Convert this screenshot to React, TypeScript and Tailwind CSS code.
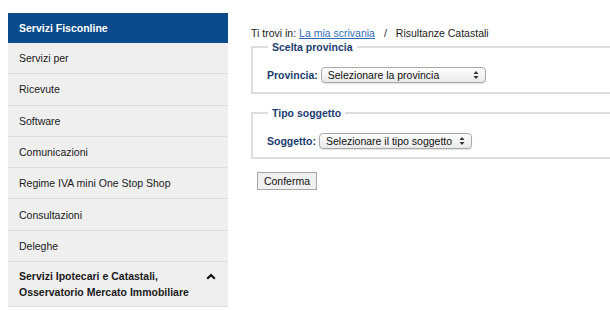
import React from "react";

function Arrows() {
  return (
    <svg width="6" height="9" viewBox="0 0 6 9" className="absolute right-[7px] top-1/2 -translate-y-1/2 pointer-events-none">
      <path d="M3 0.5 L5.5 3.5 L0.5 3.5 Z" fill="#333" />
      <path d="M3 8.5 L5.5 5.5 L0.5 5.5 Z" fill="#333" />
    </svg>
  );
}

function FakeSelect({ text, width }: { text: string; width: string }) {
  return (
    <div className={`relative ${width} h-[16px]`}>
      <select
        defaultValue=""
        className="appearance-none w-full h-full rounded-[4px] border border-[#a9a9a9] bg-gradient-to-b from-white to-[#e9e9e9] pl-[6px] pr-[14px] text-[10.5px] leading-[14px] text-[#111] shadow-[0_1px_1px_rgba(0,0,0,0.12)] font-['Liberation_Sans',Arial,sans-serif] outline-none"
      >
        <option value="">{text}</option>
      </select>
      <Arrows />
    </div>
  );
}

export default function App() {
  const items = [
    "Servizi per",
    "Ricevute",
    "Software",
    "Comunicazioni",
    "Regime IVA mini One Stop Shop",
    "Consultazioni",
    "Deleghe",
  ];
  return (
    <div className="w-[610px] h-[310px] overflow-hidden bg-white font-['Liberation_Sans',Arial,sans-serif] text-[10.5px] leading-[14px] text-[#1a1a1a]">
      <div className="flex pt-[13px] pl-[8px]">
        <nav className="w-[220px] shrink-0 bg-[#efefef]">
          <div className="h-[30px] bg-[#0b4a8b] text-white font-bold flex items-center pl-[11px]">
            Servizi Fisconline
          </div>
          {items.map((t) => (
            <div
              key={t}
              className="h-[31.3px] border-b border-[#dddddd] flex items-center pl-[11px]"
            >
              {t}
            </div>
          ))}
          <div className="flex items-center justify-between pl-[11px] pr-[12px] py-[6px] font-bold leading-[16px] border-b border-[#dddddd]">
            <span>
              Servizi Ipotecari e Catastali,
              <br />
              Osservatorio Mercato Immobiliare
            </span>
            <svg width="10" height="7" viewBox="0 0 10 7" className="mb-[16px]">
              <path d="M1.2 5.8 L5 2 L8.8 5.8" fill="none" stroke="#111" strokeWidth="2.2" />
            </svg>
          </div>
        </nav>

        <main className="ml-[23px] w-[380px] shrink-0 pt-[13px]">
          <div className="flex items-center h-[14px]">
            <span>Ti trovi in:&nbsp;</span>
            <a href="#" className="text-[#2f6db8] underline">
              La mia scrivania
            </a>
            <span className="mx-[9px]">/</span>
            <span>Risultanze Catastali</span>
          </div>

          <fieldset className="border-2 border-[#dedede] pl-[14px] pt-[13px] pb-[9px] m-0">
            <legend className="ml-[1px] px-[4px] font-bold text-[#1b3c70] leading-[14px]">
              Scelta provincia
            </legend>
            <div className="flex items-center">
              <label className="font-bold text-[#1b3c70] mr-[3px]">Provincia:</label>
              <FakeSelect text="Selezionare la provincia" width="w-[165px]" />
            </div>
          </fieldset>

          <fieldset className="mt-[12px] border-2 border-[#dedede] pl-[14px] pt-[13px] pb-[8px] m-0">
            <legend className="ml-[1px] px-[4px] font-bold text-[#1b3c70] leading-[14px]">
              Tipo soggetto
            </legend>
            <div className="flex items-center">
              <label className="font-bold text-[#1b3c70] mr-[3px]">Soggetto:</label>
              <FakeSelect text="Selezionare il tipo soggetto" width="w-[153px]" />
            </div>
          </fieldset>

          <button className="mt-[13px] ml-[6px] w-[60px] h-[18px] bg-[#f0f0f0] border border-[#a6a6a6] text-[10.5px] leading-[14px] text-[#111] font-['Liberation_Sans',Arial,sans-serif]">
            Conferma
          </button>
        </main>
      </div>
    </div>
  );
}
